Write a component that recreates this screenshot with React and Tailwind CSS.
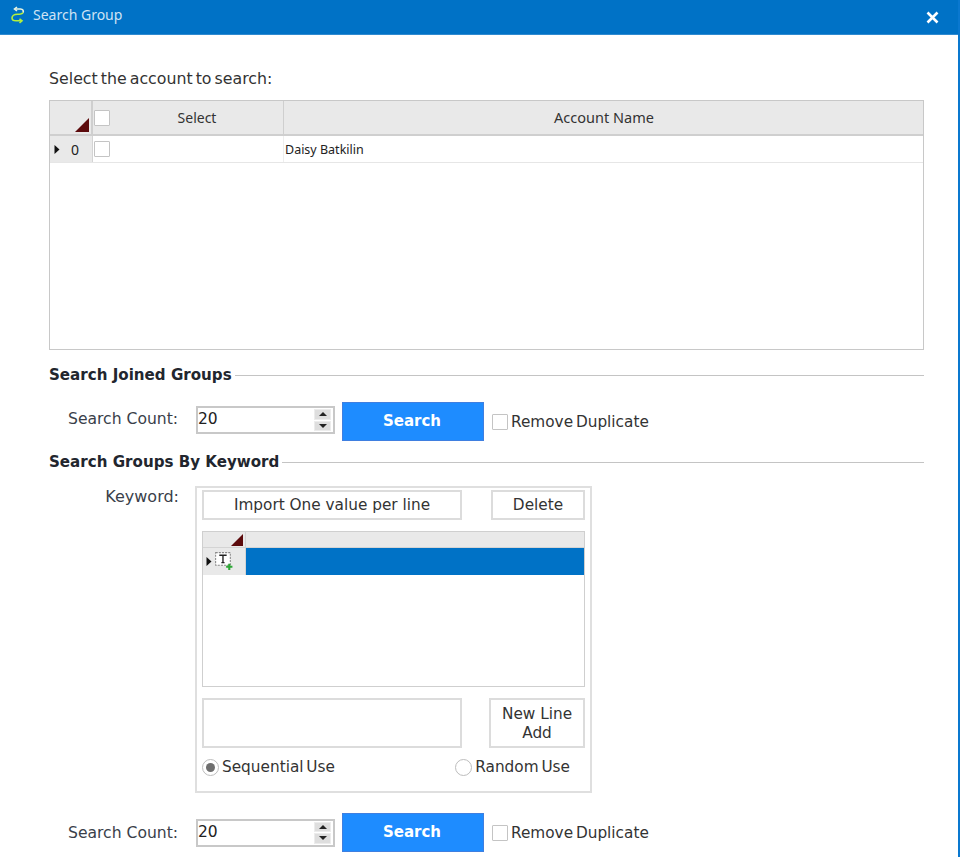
import React from "react";

const dv = "font-['DejaVu_Sans',sans-serif]";

function Check({ className = "" }) {
  return <span className={`block w-[16px] h-[16px] bg-white border border-[#c4c4c4] rounded-[1px] shrink-0 ${className}`} />;
}

function Corner({ size = 14 }) {
  return (
    <svg width={size} height={size} viewBox="0 0 14 14" className="block">
      <path d="M14 0V14H0Z" fill="#5c0a0c" />
    </svg>
  );
}

function RowArrow() {
  return (
    <svg width="6" height="9" viewBox="0 0 6 9" className="block shrink-0">
      <path d="M0.5 0V9L5.5 4.5Z" fill="#111" />
    </svg>
  );
}

function Spinner() {
  return (
    <span className="flex flex-col gap-[1px] w-[17px] h-[22px] shrink-0">
      <span className="flex-1 bg-[#dedede] border border-[#ececec] flex items-center justify-center">
        <svg width="8" height="4" viewBox="0 0 8 4"><path d="M4 0L8 4H0Z" fill="#222" /></svg>
      </span>
      <span className="flex-1 bg-[#dedede] border border-[#ececec] flex items-center justify-center">
        <svg width="8" height="4" viewBox="0 0 8 4"><path d="M0 0H8L4 4Z" fill="#222" /></svg>
      </span>
    </span>
  );
}

function SearchRow({ className = "", labelClass = "", inputClass = "" }) {
  return (
    <div className={`flex items-center ${className}`}>
      <span className={`w-[147px] pl-[19px] text-[15.6px] leading-[20px] text-[#3a3f4a] shrink-0 whitespace-nowrap ${labelClass}`}>Search Count:</span>
      <div className={`w-[139px] h-[28px] border-2 border-[#c8c8c8] bg-white flex items-center justify-between pr-[2px] shrink-0 ${inputClass}`}>
        <span className="text-[15.5px] leading-[20px] text-[#222] -mt-[2px]">20</span>
        <Spinner />
      </div>
      <button className="ml-[7px] w-[142px] h-[39px] pr-[2px] bg-[#1e8cff] border border-[#3f7fe0] text-white text-[15px] font-bold shrink-0">Search</button>
      <Check className="ml-[8px]" />
      <span className="ml-[3px] text-[15.3px] leading-[20px] text-[#333] whitespace-nowrap [word-spacing:-2px]">Remove Duplicate</span>
    </div>
  );
}

function Heading({ children, className = "" }) {
  return (
    <div className={`flex items-center h-[20px] ${className}`}>
      <span className="font-bold text-[15.1px] leading-[20px] text-[#22262e] whitespace-nowrap">{children}</span>
      <span className="flex-1 h-[1px] bg-[#c4c4c4] ml-[3px]" />
    </div>
  );
}

function OutlineBtn({ children, className = "" }) {
  return (
    <button className={`border-2 border-[#dcdcdc] bg-white text-[15.3px] leading-[19px] text-[#333] ${className}`}>{children}</button>
  );
}

function Radio({ checked, label }) {
  return (
    <span className="flex items-center">
      <span className="w-[17px] h-[17px] rounded-full border border-[#bdbdbd] bg-white flex items-center justify-center shrink-0">
        {checked && <span className="w-[9px] h-[9px] rounded-full bg-[#6e6e6e]" />}
      </span>
      <span className="ml-[3px] text-[15.3px] leading-[20px] text-[#333] [word-spacing:-2px] whitespace-nowrap">{label}</span>
    </span>
  );
}

export default function App() {
  return (
    <div className={`w-[960px] h-[857px] bg-white overflow-hidden border-r-2 border-[#0a78cf] ${dv}`}>
      <div className="h-[35px] bg-[#0072c6] border-b border-[#2f8ad0] flex items-center justify-between pl-[10px] pr-[19px]">
        <div className="flex items-center -mt-[4px]">
          <svg width="16" height="18" viewBox="0 0 16 18" fill="none" strokeWidth="1.6">
            <path d="M7 1L4.5 3L7 5" stroke="#e8f4e0" />
            <path d="M5 3H10.5C13 3 13.8 5 13 6.6" stroke="#e8f4e0" />
            <path d="M13 6.6C12 8.3 10 8.3 7.5 8.3C4 8.3 2 9.8 2 12C2 14 3.5 14.8 6 14.8H12" stroke="#b4f03c" />
            <path d="M9.5 12.8L12 14.8L9.5 16.8" stroke="#b4f03c" />
          </svg>
          <span className="ml-[7px] font-['Noto_Sans',sans-serif] text-[14px] leading-[20px] text-[#cfe3f4]">Search Group</span>
        </div>
        <svg width="13" height="13" viewBox="0 0 13 13" stroke="#fff" strokeWidth="2.6" fill="none">
          <path d="M1.5 1.5L11.5 11.5M11.5 1.5L1.5 11.5" />
        </svg>
      </div>

      <div className="w-[875px] ml-[49px]">
        <div className="mt-[34px] h-[20px] text-[15.8px] leading-[20px] text-[#333] [word-spacing:-2px] whitespace-nowrap">Select the account to search:</div>

        <div className="mt-[11px] h-[250px] border border-[#c8c8c8] bg-white">
          <div className="flex h-[35px] bg-[#e9e9e9] border-b-2 border-[#cfcfcf]">
            <div className="w-[43px] border-r-2 border-[#cfcfcf] flex items-end justify-end pr-[2px] pb-[2px]"><Corner /></div>
            <div className="w-[191px] border-r border-[#cfcfcf] relative flex items-center justify-center font-['Noto_Sans',sans-serif] text-[14px] text-[#333] pl-[18px]">
              <Check className="absolute left-[1px] top-[9px]" />
              Select
            </div>
            <div className="flex-1 flex items-center justify-center font-['Noto_Sans',sans-serif] text-[14.5px] text-[#333] pl-[1px]">Account Name</div>
          </div>
          <div className="flex h-[27px] border-b border-[#e6e6e6]">
            <div className="w-[43px] bg-[#e9e9e9] border-r border-[#d4d4d4] flex items-center pl-[4px]">
              <RowArrow />
              <span className="ml-[11px] font-['Noto_Sans',sans-serif] text-[14px] text-[#222]">0</span>
            </div>
            <div className="w-[191px] border-r border-[#eeeeee] flex items-center pl-[1px]"><Check /></div>
            <div className="flex-1 flex items-center pl-[1px] pt-[2px] font-['Noto_Sans',sans-serif] text-[12.5px] text-[#222]">Daisy Batkilin</div>
          </div>
        </div>

        <Heading className="mt-[15px]">Search Joined Groups</Heading>
        <SearchRow className="mt-[17px]" labelClass="-mt-[6px]" inputClass="-mt-[3px]" />
        <Heading className="mt-[11px]">Search Groups By Keyword</Heading>

        <div className="flex mt-[14px]">
          <span className="w-[130px] pt-[1px] text-right text-[16px] leading-[20px] text-[#3a3f4a] shrink-0">Keyword:</span>
          <div className="ml-[16px] w-[397px] h-[307px] border-2 border-[#dfdfdf] px-[5px] pt-[2px]">
            <div className="flex justify-between h-[30px]">
              <OutlineBtn className="w-[260px]">Import One value per line</OutlineBtn>
              <OutlineBtn className="w-[94px]">Delete</OutlineBtn>
            </div>
            <div className="mt-[11px] h-[156px] border border-[#cfcfcf] bg-white">
              <div className="h-[16px] bg-[#e9e9e9] border-b border-[#d4d4d4] flex">
                <div className="w-[43px] border-r border-[#d4d4d4] flex items-end justify-end pr-[2px] pb-[1px]"><Corner size={12} /></div>
              </div>
              <div className="h-[27px] flex">
                <div className="w-[43px] bg-[#e9e9e9] border-r border-[#d4d4d4] flex items-center pl-[3px]">
                  <RowArrow />
                  <svg width="21" height="21" viewBox="0 0 20 20" className="ml-[1px] -mt-[2px] block">
                    <rect x="2.5" y="2.5" width="14" height="12" fill="#fff" stroke="#8a8a8a" strokeDasharray="2 1" />
                    <path d="M6 5H13M9.5 5V12M8 12H11" stroke="#222" strokeWidth="1.3" fill="none" />
                    <path d="M15.5 13V19M12.5 16H18.5" stroke="#2ea836" strokeWidth="2" />
                  </svg>
                </div>
                <div className="flex-1 bg-[#0072c6]" />
              </div>
            </div>
            <div className="mt-[11px] flex justify-between h-[50px]">
              <div className="w-[260px] border-2 border-[#dcdcdc]" />
              <OutlineBtn className="w-[96px] pt-[1px]">New Line<br />Add</OutlineBtn>
            </div>
            <div className="mt-[9px] flex items-center justify-between pr-[15px]">
              <Radio checked label="Sequential Use" />
              <Radio label="Random Use" />
            </div>
          </div>
        </div>

        <SearchRow className="mt-[20px]" />
      </div>
    </div>
  );
}
